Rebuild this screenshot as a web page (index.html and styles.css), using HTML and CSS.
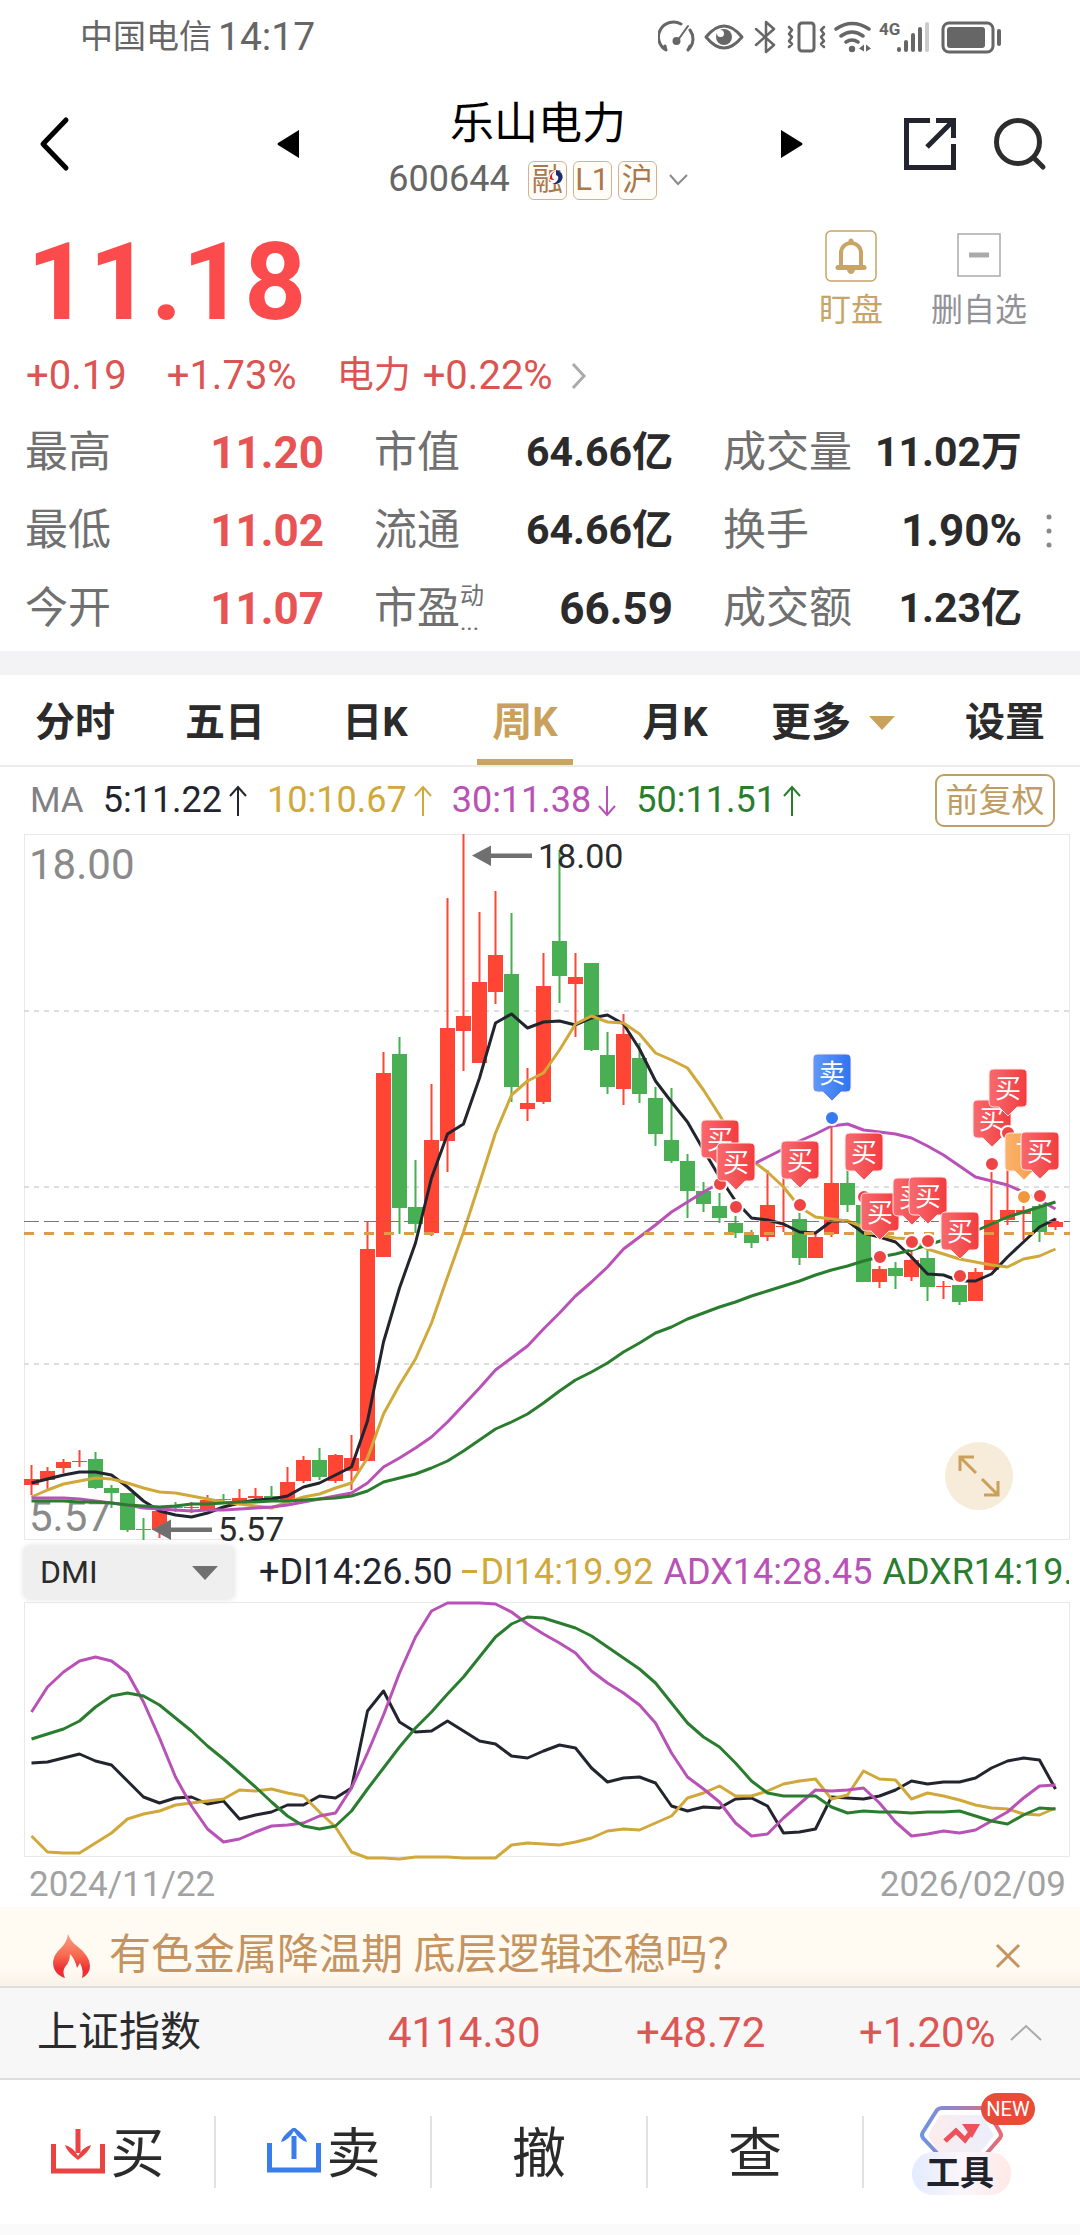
FILE: index.html
```html
<!DOCTYPE html>
<html lang="zh-CN">
<head>
<meta charset="utf-8">
<meta name="viewport" content="width=device-width, initial-scale=1">
<title>乐山电力 600644</title>
<link rel="stylesheet" href="styles.css">
</head>
<body>
<div class="status">
  <div class="status-left"><span>中国电信</span><span class="clock">14:17</span></div>
  <svg class="status-icons" viewBox="658 17 346 38" width="346" height="38" fill="none" stroke="#666" stroke-width="3" stroke-linecap="round" stroke-linejoin="round">
    <path d="M666 49a15 15 0 0 1 15-26M690 29a15 15 0 0 1-2 20M666 49l-1-4M688 49l2-4"/>
    <path d="M688 25l-10 14" stroke-width="2"/><circle cx="676.500" cy="40" r="2.500" fill="#666"/>
    <path d="M706 36q9-11 18-11t18 11q-9 11-18 11t-18-11z"/>
    <circle cx="724" cy="36" r="8" fill="#666" stroke="none"/><circle cx="720.500" cy="32.500" r="3.500" fill="#fff" stroke="none"/>
    <path d="M756 28l18 16-8 7V21l8 7-18 16" stroke-width="2.500"/>
    <rect x="799" y="22" width="15" height="28" rx="3"/>
    <path d="M789 26l3 3-3 4 3 3-3 4 3 3-3 3M824 26l-3 3 3 4-3 3 3 4-3 3 3 3" stroke-width="2.500"/>
    <path d="M836 28q16-11 33 0M841 35q11-8 22 0M846 41q6-4 12 0" stroke-width="3.500"/>
    <circle cx="852" cy="48" r="3.200" fill="#666" stroke="none"/>
    <path d="M859 47.500l5-4v7zM871 47.500l-5-4v7z" fill="#666" stroke="none"/>
    <text x="879" y="34" class="net" fill="#666" stroke="none">4G</text>
    <path d="M899 48v1M906 41v8M913 34v15M920 28v21" stroke-width="4"/><path d="M927 23v26" stroke="#ccc" stroke-width="4"/>
    <rect x="943" y="22" width="50" height="29" rx="6"/><rect x="947" y="26" width="38" height="21" rx="3" fill="#666" stroke="none"/>
    <path d="M999 30v13" stroke-width="4"/>
  </svg>
</div>

<header class="top">
  <button class="plain back" aria-label="返回"><svg width="34" height="60" viewBox="0 0 34 60" fill="none" stroke="#000" stroke-width="5" stroke-linecap="round" stroke-linejoin="round"><path d="M30 6 7 30l23 24"/></svg></button>
  <div class="switcher">
    <button class="plain" aria-label="上一只"><svg width="22" height="30" viewBox="0 0 22 30"><path d="M22 1v28L1 16q-1-1 0-2z"/></svg></button>
    <div class="title">
      <h1>乐山电力</h1>
      <div class="code-row">
        <span class="code">600644</span>
        <span class="tag">融<svg class="tag-logo" viewBox="0 0 14 14" width="14" height="14"><circle cx="7" cy="7" r="7" fill="#fff"/><path d="M7 0a7 7 0 1 1-4 13 5 5 0 0 0 6-4 3 3 0 0 0-2-4z" fill="#1d2a6b"/><path d="M8 1a5 5 0 0 0-4 8 3 3 0 0 0 4-1 5 5 0 0 1-7 1A7 7 0 0 1 8 1z" fill="#d8202c"/></svg></span>
        <span class="tag">L1</span>
        <span class="tag">沪</span>
        <svg class="code-arrow" width="19" height="12" viewBox="0 0 19 12" fill="none" stroke="#8a8a8a" stroke-width="2"><path d="M1 1l8 9 9-9"/></svg>
      </div>
    </div>
    <button class="plain" aria-label="下一只"><svg width="22" height="30" viewBox="0 0 22 30"><path d="M0 1v28l21-13q1-1 0-2z"/></svg></button>
  </div>
  <div class="top-actions">
    <button class="plain" aria-label="分享"><svg width="54" height="54" viewBox="0 0 54 54" fill="none" stroke="#24242e" stroke-width="5"><path d="M27 3.500H3.500v47h47V27M33 3.500h17.500V21M50 4 24 30"/></svg></button>
    <button class="plain" aria-label="搜索"><svg width="54" height="54" viewBox="0 0 54 54" fill="none" stroke="#2d2d2d" stroke-width="5" stroke-linecap="round"><circle cx="25" cy="25" r="21.500"/><path d="M41 41l9 9"/></svg></button>
  </div>
</header>

<main>
<section class="quote">
  <div class="price">11.18</div>
  <div class="watch">
    <button class="plain watch-btn gold"><svg width="52" height="52" viewBox="0 0 52 52" fill="none" stroke="currentColor"><rect x="1" y="1" width="50" height="50" rx="5" stroke-width="1.500"/><path d="M16 37V23a10 10 0 0 1 20 0v14" stroke-width="4"/><path d="M13 37.500h26" stroke-width="5" stroke-linecap="round"/><circle cx="26" cy="11" r="2.500" fill="currentColor" stroke="none"/><path d="M22 40h8q-1 4-4 4t-4-4z" fill="currentColor" stroke="none"/></svg><span>盯盘</span></button>
    <button class="plain watch-btn gray"><svg width="52" height="52" viewBox="0 0 52 52" fill="none" stroke="#aaa"><rect x="5" y="4" width="42" height="42" stroke-width="1.500"/><path d="M16 25h20" stroke-width="5"/></svg><span>删自选</span></button>
  </div>
</section>
<div class="change"><span>+0.19</span><span>+1.73%</span><a href="#sector"><span class="cn">电力</span> +0.22%<svg width="16" height="28" viewBox="0 0 16 28" fill="none" stroke="#aaa" stroke-width="3"><path d="M2 2l11 12L2 26"/></svg></a></div>

<div class="stats-wrap">
  <dl class="stats">
    <div><dt>最高</dt><dd class="up">11.20</dd></div><div><dt>市值</dt><dd class="unit">64.66亿</dd></div><div><dt>成交量</dt><dd class="unit">11.02万</dd></div>
    <div><dt>最低</dt><dd class="up">11.02</dd></div><div><dt>流通</dt><dd class="unit">64.66亿</dd></div><div><dt>换手</dt><dd>1.90%</dd></div>
    <div><dt>今开</dt><dd class="up">11.07</dd></div><div><dt class="pe">市盈<span class="pe-note"><small>动</small><small>...</small></span></dt><dd>66.59</dd></div><div><dt>成交额</dt><dd class="unit">1.23亿</dd></div>
  </dl>
  <button class="plain more-dots" aria-label="更多指标"><svg width="6" height="34" viewBox="0 0 6 34" fill="#888"><circle cx="3" cy="3" r="2.500"/><circle cx="3" cy="17" r="2.500"/><circle cx="3" cy="31" r="2.500"/></svg></button>
</div>

<nav class="tabs">
  <button>分时</button><button>五日</button><button>日K</button><button class="active">周K</button><button>月K</button>
  <button class="more">更多<svg width="26" height="14" viewBox="0 0 26 14" fill="#c9a05c"><path d="M0 0h26L13 14z"/></svg></button><button>设置</button>
</nav>

<section class="ma-row">
  <span class="ma-name">MA</span>
  <span class="black">5:11.22<svg class="arrow" viewBox="0 0 20 32"><path d="M10 31V2M2 11l8-9 8 9"/></svg></span>
  <span class="yellow">10:10.67<svg class="arrow" viewBox="0 0 20 32"><path d="M10 31V2M2 11l8-9 8 9"/></svg></span>
  <span class="purple">30:11.38<svg class="arrow" viewBox="0 0 20 32"><path d="M10 1v29M2 21l8 9 8-9"/></svg></span>
  <span class="green">50:11.51<svg class="arrow" viewBox="0 0 20 32"><path d="M10 31V2M2 11l8-9 8 9"/></svg></span>
  <button class="adjust">前复权</button>
</section>

<section class="chart">
  <svg id="kline" class="plot" viewBox="24 834 1047 706"></svg>
  <button class="plain expand" aria-label="全屏"><svg width="68" height="68" viewBox="0 0 68 68" fill="none" stroke="#c9a05c" stroke-width="3"><circle cx="34" cy="34" r="34" fill="#f7ecd9" stroke="none"/><path d="M15 29V15h14M16 16l15 15M53 39v14H39M52 52 37 37"/></svg></button>
</section>

<section class="indicator">
  <label class="picker"><select aria-label="指标"><option>DMI</option></select><svg width="26" height="14" viewBox="0 0 26 14" fill="#707070"><path d="M0 0h26L13 14z"/></svg></label>
  <div class="legend"><span class="black">+DI14:26.50</span><span class="yellow"><i class="dash"></i>DI14:19.92</span><span class="purple">ADX14:28.45</span><span class="green">ADXR14:19.</span></div>
</section>
<section class="chart">
  <svg id="dmi" class="plot" viewBox="24 1602 1047 258"></svg>
</section>
<div class="dates"><time>2024/11/22</time><time>2026/02/09</time></div>
</main>

<aside class="banner">
  <svg width="38" height="44" viewBox="0 0 38 44"><defs><linearGradient id="flame" x1="0" y1="0" x2="0" y2="1"><stop offset="0" stop-color="#f9a183"/><stop offset=".5" stop-color="#f7684f"/><stop offset=".8" stop-color="#ee2f35"/></linearGradient></defs><path d="M15 0q3 8 9 12 13 10 13 20 0 8-8 12 2-7-2-15l-3 5q-2-9-7-14 0 8-5 13-3 4 0 11-12-4-12-16Q1 20 8 14 14 8 15 0z" fill="url(#flame)"/></svg>
  <a href="#news">有色金属降温期 底层逻辑还稳吗？</a>
  <button class="plain" aria-label="关闭"><svg width="26" height="26" viewBox="0 0 26 26" fill="none" stroke="#c4935f" stroke-width="3"><path d="M2 2l22 22M24 2 2 24"/></svg></button>
</aside>

<div class="index-bar">
  <span class="index-name">上证指数</span><span>4114.30</span><span>+48.72</span><span>+1.20%</span>
  <svg width="32" height="18" viewBox="0 0 32 18" fill="none" stroke="#aaa" stroke-width="2"><path d="M1 16 16 2l15 14"/></svg>
</div>

<footer class="trade">
  <button><svg width="56" height="48" viewBox="0 0 56 48" fill="none" stroke="#ea4343" stroke-width="5"><path d="M3.500 16v27h49V16"/><path d="M28 1v24"/><path d="M15 17q8 2 13 11 5-9 13-11-1 6-13 15Q16 23 15 17z" fill="#ea4343" stroke="none"/></svg><span>买</span></button>
  <button><svg width="56" height="48" viewBox="0 0 56 48" fill="none" stroke="#3b7ceb" stroke-width="5"><path d="M3.500 15v27h49V15"/><path d="M28 31V8"/><path d="M15 14q8-2 13-11 5 9 13 11-1-6-13-15Q16 8 15 14z" fill="#3b7ceb" stroke="none"/></svg><span>卖</span></button>
  <button><span>撤</span></button>
  <button><span>查</span></button>
  <button class="tools"><svg width="124" height="103" viewBox="912 2093 124 103">
    <defs>
      <linearGradient id="hex" x1="0" x2="1"><stop offset="0" stop-color="#6f94e0"/><stop offset=".3" stop-color="#8d86cf"/><stop offset="1" stop-color="#e56b74"/></linearGradient>
      <linearGradient id="hexFill" x1="0" x2="1"><stop offset="0" stop-color="#fdeceb"/><stop offset="1" stop-color="#e9effc"/></linearGradient>
      <linearGradient id="pill" x1="0" x2="1"><stop offset="0" stop-color="#e3ebff"/><stop offset=".5" stop-color="#faf6fb"/><stop offset="1" stop-color="#ffe9e6"/></linearGradient>
    </defs>
    <path d="M940 2115h42l12 20-14 18h-42l-10-18z" fill="url(#hexFill)"/>
    <path d="M937 2153l-14-15q-2-3 0-6l14-22q2-2 5-2h40q3 0 5 2l13 22q2 3 0 6l-13 15" fill="none" stroke="url(#hex)" stroke-width="4"/>
    <path d="M945 2141l11-10 9 9 9-12" fill="none" stroke="#ee515a" stroke-width="5"/><path d="M962 2124h18l-8 14z" fill="#ee515a"/>
    <rect x="912" y="2152" width="99" height="43" rx="21" fill="url(#pill)"/>
    <text x="960" y="2185" text-anchor="middle" class="tools-text">工具</text>
    <rect x="981" y="2093" width="54" height="32" rx="16" fill="#e84b37"/>
    <text x="1008" y="2116" text-anchor="middle" class="new-text">NEW</text>
  </svg></button>
</footer>
<script src="chart.js"></script>
</body>
</html>
```
FILE: styles.css
```css
* { box-sizing: border-box; }
body { margin: 0; background: #fff; color: #2b2b2b; font-family: Roboto, "Noto Sans CJK SC", sans-serif; font-size: 35px; line-height: 1.2; }
button { font: inherit; color: inherit; background: none; border: 0; padding: 0; margin: 0; }
svg { display: block; flex: none; }
a { color: inherit; text-decoration: none; }
.plain { display: flex; align-items: center; }
.black { color: #22242e; }
.yellow { color: #d0a93a; }
.purple { color: #b952b7; }
.green { color: #2a7d2e; }

.status { display: flex; justify-content: space-between; align-items: center; height: 74px; padding: 0 76px 0 80px; color: #666; }
.status-left { display: flex; align-items: center; gap: 6px; font-size: 33px; }
.clock { font-size: 39px; }
.net { font-size: 17px; font-weight: 700; }

.top { display: grid; grid-template-columns: 1fr 526px 1fr; align-items: center; height: 140px; }
.back { padding-left: 36px; }
.switcher { display: flex; justify-content: space-between; align-items: center; }
.title { display: flex; flex-direction: column; align-items: center; gap: 8px; padding: 8px 4px 0 0; }
.title h1 { margin: 0; color: #000; font-size: 44px; line-height: 56px; font-weight: 400; }
.code-row { display: flex; align-items: center; gap: 6px; height: 40px; }
.code { color: #666; margin-right: 12px; font-size: 36px; }
.tag { position: relative; display: flex; align-items: center; justify-content: center; width: 39px; height: 39px; border: 1px solid #d9b08c; border-radius: 6px; color: #a9784d; background: #fffdf9; font-size: 31px; line-height: 36px; }
.tag-logo { position: absolute; right: 3px; top: 8px; }
.code-arrow { margin-left: 6px; }
.top-actions { display: flex; justify-content: flex-end; gap: 36px; padding-right: 33px; }

.quote { display: flex; justify-content: space-between; padding: 12px 53px 14px 27px; }
.price { color: #fc4b4c; font-size: 108px; line-height: 112px; font-weight: 700; }
.watch { display: flex; gap: 48px; padding-top: 4px; }
.watch-btn { flex-direction: column; gap: 8px; font-size: 32px; line-height: 40px; }
.gold { color: #c9a466; }
.gray { color: #929298; }
.change { display: flex; gap: 40px; padding: 0 26px; color: #dc5452; font-size: 40px; line-height: 48px; }
.change a { display: flex; align-items: center; gap: 12px; }
.change svg { margin-left: 6px; }
.cn { font-size: 37px; }

.stats-wrap { display: flex; align-items: center; padding: 14px 28px 3px 25px; border-bottom: 24px solid #f3f3f5; }
.stats { flex: 1; display: grid; grid-template-columns: repeat(3, 1fr); grid-auto-rows: 78px; column-gap: 50px; margin: 0; }
.stats > div { display: flex; justify-content: space-between; align-items: center; white-space: nowrap; }
.stats dt { color: #707070; font-size: 43px; }
.stats dd { margin: 0; font-size: 44px; font-weight: 700; }
.stats .unit { font-size: 41px; }
.stats .up { color: #e85353; }
.pe { display: flex; }
.pe-note { display: flex; flex-direction: column; }
.pe-note small { font-size: 24px; line-height: 26px; }
.more-dots { padding-left: 24px; }

.tabs { display: grid; grid-template-columns: 5fr 5fr 5fr 5fr 5fr 6fr 5fr; border-bottom: 2px solid #ebebed; }
.tabs button { position: relative; display: flex; align-items: center; justify-content: center; gap: 18px; height: 90px; padding-top: 6px; font-size: 40px; font-weight: 700; }
.tabs .more { padding-right: 14px; }
.tabs .active { color: #c9a05c; }
.tabs .active::after { content: ""; position: absolute; left: 18%; right: 18%; bottom: 0; height: 6px; background: #c9a466; }

.ma-row { display: flex; align-items: center; gap: 19px; height: 67px; padding: 0 25px 0 30px; font-size: 36px; }
.ma-row span { display: flex; align-items: center; gap: 6px; }
.ma-row .ma-name { color: #808085; font-size: 35px; }
.arrow { width: 20px; height: 32px; fill: none; stroke: currentColor; stroke-width: 2; }
.adjust { margin-left: auto; width: 120px; height: 53px; border: 2px solid #bf9f68; border-radius: 9px; color: #bf9c62; font-size: 33px; line-height: 40px; }

.chart { position: relative; padding: 0 9px 0 24px; }
.plot { width: 100%; height: auto; overflow: visible; }
.plot text { font-size: 34px; fill: #2b2b2b; }
.plot .scale { font-size: 42px; fill: #8a8a8a; }
.plot .pin-text { font-size: 26px; fill: #fff; }
.expand { position: absolute; right: 67px; bottom: 30px; }

.indicator { display: flex; align-items: center; gap: 25px; height: 62px; padding: 3px 11px 0 24px; }
.picker { position: relative; flex: none; width: 210px; height: 53px; display: flex; align-items: center; justify-content: flex-end; padding-right: 16px; background: #efefef; border-radius: 5px; box-shadow: 0 0 6px #ddd; }
.picker select { position: absolute; inset: 0; width: 100%; padding: 0 16px; border: 0; appearance: none; background: none; font: inherit; font-size: 32px; color: inherit; }
.legend { flex: 1; display: flex; gap: 10px; overflow: hidden; white-space: nowrap; font-size: 36px; }
.dash { display: inline-block; width: 15px; height: 3px; margin-right: 3px; background: currentColor; vertical-align: 11px; }
.dates { display: flex; justify-content: space-between; align-items: center; height: 47px; padding: 2px 14px 0 29px; color: #a2a2a2; }

.banner { display: flex; align-items: center; gap: 18px; height: 79px; padding: 18px 59px 0 53px; background: linear-gradient(#fffaf2 80%, #f9f2e8); color: #c4935f; font-size: 42px; white-space: nowrap; }
.banner a { flex: 1; }
.index-bar { display: grid; grid-template-columns: 351px 248px 223px 151px 1fr; align-items: center; height: 94px; padding: 0 37px; border-top: 2px solid #dedede; border-bottom: 2px solid #dedede; background: #f7f7f7; color: #dc5754; font-size: 42px; }
.index-name { color: #2b2b2b; font-size: 41px; }
.trade { display: grid; grid-template-columns: repeat(5, 1fr); align-items: center; height: 155px; border-bottom: 11px solid #fafafa; }
.trade button { display: flex; align-items: center; justify-content: center; gap: 5px; height: 72px; border-right: 2px solid #e2e2e2; font-size: 54px; line-height: 64px; }
.trade span { padding-top: 6px; }
.trade .tools { border: 0; padding: 0 0 16px 4px; }
.tools-text { font-size: 34px; font-weight: 700; fill: #20222c; }
.new-text { font-size: 20px; fill: #fff; }
```
FILE: chart.js
```js
const NS = 'http://www.w3.org/2000/svg';
const RED = '#ff4634', GREEN = '#48af53';
const X0 = 31.5, STEP = 16;
const xAt = i => X0 + STEP * i;

function add(parent, tag, attrs, text) {
  const el = document.createElementNS(NS, tag);
  for (const k in attrs) el.setAttribute(k, attrs[k]);
  if (text) el.textContent = text;
  parent.appendChild(el);
  return el;
}
function line(svg, color, ys) {
  add(svg, 'polyline', { points: ys.map((y, i) => xAt(i) + ',' + y).join(' '), fill: 'none', stroke: color, 'stroke-width': 3, 'stroke-linejoin': 'round' });
}

// up/down flag, high, low, body top, body bottom
const candles = [
  [1,1465,1495,1479,1485],[1,1467,1490,1471,1480],[1,1459,1473,1462,1468],[1,1450,1467,1461,1462],[0,1452,1489,1459,1488],
  [0,1485,1508,1488,1493],[0,1493,1532,1493,1530],[0,1518,1540,1529,1530],[1,1511,1538,1511,1530],[0,1502,1512,1507,1508],
  [1,1502,1513,1507,1508],[1,1495,1510,1500,1509],[0,1494,1503,1499,1500],[1,1489,1503,1498,1502],[1,1488,1500,1496,1498],
  [0,1486,1500,1496,1500],[1,1467,1500,1482,1500],[1,1456,1483,1460,1481],[0,1448,1480,1460,1477],[1,1454,1483,1455,1481],
  [1,1435,1490,1458,1471],[1,1222,1461,1249,1461],[1,1052,1257,1073,1257],[0,1037,1234,1054,1208],[0,1160,1233,1207,1224],
  [1,1084,1236,1140,1233],[1,898,1172,1028,1141],[1,834,1071,1016,1031],[1,912,1063,982,1063],[1,891,1004,955,992],
  [0,913,1102,974,1087],[1,1068,1121,1103,1109],[1,953,1104,986,1102],[0,850,1003,941,976],[1,953,1037,977,984],
  [0,963,1051,963,1050],[0,1032,1094,1055,1087],[1,1014,1105,1034,1089],[0,1043,1103,1058,1094],[0,1087,1146,1098,1134],
  [0,1088,1163,1140,1161],[0,1154,1218,1161,1191],[0,1182,1212,1191,1204],[0,1193,1223,1206,1218],[0,1216,1238,1223,1233],
  [0,1230,1248,1235,1243],[1,1170,1241,1205,1237],[1,1177,1232,1226,1227],[0,1210,1265,1219,1258],[1,1232,1258,1237,1258],
  [1,1127,1237,1183,1234],[0,1170,1212,1183,1205],[0,1203,1282,1205,1282],[1,1266,1288,1269,1282],[0,1262,1289,1268,1276],
  [1,1247,1281,1260,1277],[0,1248,1301,1258,1287],[1,1281,1299,1286,1287],[0,1285,1305,1285,1302],[1,1268,1301,1272,1301],
  [1,1172,1270,1220,1270],[1,1170,1225,1210,1220],[1,1206,1240,1210,1214],[0,1200,1242,1206,1232],[1,1218,1230,1222,1227]
];
const ma5 = [1483,1479,1475,1472,1472,1475,1487,1501,1511,1515,1517,1513,1507,1503,1500,1499,1496,1487,1483,1475,1467,1421,1342,1288,1243,1178,1134,1124,1078,1023,1014,1028,1022,1021,1025,1018,1015,1024,1049,1081,1102,1122,1150,1177,1201,1218,1220,1224,1232,1233,1221,1221,1233,1237,1242,1257,1274,1275,1281,1281,1274,1257,1242,1227,1219];
const ma10 = [1497,1490,1484,1481,1478,1479,1483,1488,1492,1493,1496,1499,1502,1504,1506,1508,1502,1497,1494,1488,1483,1458,1414,1385,1359,1323,1277,1232,1183,1133,1095,1081,1073,1050,1024,1016,1022,1023,1034,1053,1060,1068,1090,1115,1142,1160,1172,1187,1207,1217,1219,1221,1227,1235,1238,1239,1249,1254,1259,1262,1265,1267,1259,1256,1249];
const ma30 = [1498,1498,1498,1499,1501,1503,1505,1508,1509,1510,1511,1510,1510,1509,1508,1507,1505,1502,1499,1496,1493,1483,1467,1458,1448,1437,1422,1405,1388,1370,1358,1346,1329,1313,1296,1282,1267,1249,1237,1225,1212,1202,1192,1183,1173,1165,1157,1149,1141,1134,1126,1124,1130,1132,1134,1138,1146,1155,1166,1177,1181,1185,1192,1200,1209];
const ma50 = [1501,1501,1501,1502,1502,1503,1505,1506,1507,1506,1504,1504,1503,1502,1502,1501,1501,1500,1499,1498,1496,1491,1482,1478,1474,1468,1461,1451,1440,1429,1422,1414,1403,1391,1380,1372,1363,1352,1343,1333,1327,1319,1313,1307,1302,1296,1291,1286,1281,1275,1270,1266,1261,1257,1254,1250,1245,1240,1236,1231,1224,1217,1212,1207,1202];
// candle index, top of the flag, label, gradient
const pins = [[43,1120,'买','buy'],[44,1143,'买','buy'],[48,1141,'买','buy'],[50,1054,'卖','sell'],[52,1133,'买','buy'],[53,1193,'买','buy'],[55,1178,'买','buy'],[56,1177,'买','buy'],[58,1212,'买','buy'],[60,1100,'买','buy'],[61,1069,'买','buy'],[62,1133,'T','both'],[63,1132,'买','buy']];
const dotColor = { buy: '#ef4444', sell: '#357bf0', both: '#f0983c' };

const k = document.getElementById('kline');
const defs = add(k, 'defs', {});
[['buy', '#f96a6e', '#f13c3f'], ['sell', '#6298f8', '#2f74f2'], ['both', '#fbb26c', '#f39c40']].forEach(([id, a, b]) => {
  const g = add(defs, 'linearGradient', { id });
  add(g, 'stop', { offset: 0, 'stop-color': a });
  add(g, 'stop', { offset: 1, 'stop-color': b });
});
add(k, 'rect', { x: 24.5, y: 834.5, width: 1045, height: 705, fill: 'none', stroke: '#e9e9e9', 'stroke-width': 1 });
[1011, 1187, 1364].forEach(y => add(k, 'path', { d: `M24 ${y}H1070`, stroke: '#dedede', 'stroke-width': 2, 'stroke-dasharray': '5 5' }));
candles.forEach(([up, hi, lo, top, bottom], i) => {
  const fill = up ? RED : GREEN;
  add(k, 'rect', { x: xAt(i) - 1, y: hi, width: 2, height: lo - hi, fill });
  add(k, 'rect', { x: xAt(i) - 7.5, y: top, width: 15, height: bottom - top, fill });
});
add(k, 'text', { x: 29, y: 879, class: 'scale' }, '18.00');
add(k, 'text', { x: 29, y: 1531, class: 'scale' }, '5.57');
line(k, '#22242e', ma5);
line(k, '#d0a93a', ma10);
line(k, '#b952b7', ma30);
line(k, '#2a7d2e', ma50);
add(k, 'path', { d: 'M24 1221.5H1070', stroke: '#777', 'stroke-width': 1, 'stroke-dasharray': '15 5' });
add(k, 'path', { d: 'M24 1233.5H1070', stroke: '#dd9c45', 'stroke-width': 3, 'stroke-dasharray': '10 10' });
add(k, 'path', { d: 'M472 855.5l19-10v8h41v4.500h-41v8z', fill: '#707070' });
add(k, 'text', { x: 538, y: 868 }, '18.00');
add(k, 'path', { d: 'M152 1529.500l19-10v8h41v4.500h-41v8z', fill: '#707070' });
add(k, 'text', { x: 218, y: 1541 }, '5.57');
pins.forEach(([i, y, label, kind]) => {
  const x = xAt(i) + 0.5;
  add(k, 'path', { d: `M${x - 14} ${y}h28q5 0 5 5v28q0 5-5 5h-5l-9 9-9-9h-5q-5 0-5-5v-28q0-5 5-5z`, fill: `url(#${kind})`, stroke: '#ffe7e7', 'stroke-width': 1 });
  add(k, 'text', { x, y: y + 29, 'text-anchor': 'middle', class: 'pin-text' }, label);
  add(k, 'circle', { cx: x, cy: y + 64, r: 7, fill: dotColor[kind], stroke: '#fff', 'stroke-width': 2 });
});

const d = document.getElementById('dmi');
add(d, 'rect', { x: 24.5, y: 1602.5, width: 1045, height: 254, fill: 'none', stroke: '#e9e9e9', 'stroke-width': 1 });
line(d, '#22242e', [1763,1762,1758,1754,1761,1765,1781,1797,1803,1798,1797,1804,1801,1819,1815,1812,1805,1805,1796,1798,1788,1711,1691,1722,1732,1731,1721,1731,1741,1744,1756,1758,1751,1745,1748,1768,1782,1778,1777,1783,1806,1811,1807,1808,1799,1798,1806,1833,1832,1829,1797,1798,1799,1796,1790,1781,1784,1782,1782,1778,1768,1761,1758,1760,1789]);
line(d, '#d0a93a', [1836,1852,1853,1853,1843,1833,1819,1814,1811,1805,1803,1801,1799,1790,1791,1789,1793,1796,1812,1827,1852,1858,1858,1859,1857,1857,1857,1858,1858,1858,1845,1843,1844,1845,1842,1838,1831,1829,1830,1823,1816,1798,1793,1786,1796,1796,1791,1784,1781,1779,1799,1795,1771,1779,1780,1799,1793,1796,1800,1805,1808,1809,1814,1815,1808]);
line(d, '#b952b7', [1712,1687,1672,1661,1657,1661,1673,1702,1738,1777,1806,1829,1842,1839,1832,1826,1825,1823,1816,1813,1788,1753,1715,1673,1637,1611,1603,1603,1603,1604,1612,1624,1634,1643,1653,1671,1683,1693,1705,1723,1753,1777,1789,1802,1823,1836,1834,1818,1804,1790,1791,1790,1788,1803,1822,1836,1834,1831,1833,1830,1821,1812,1798,1786,1785]);
line(d, '#2a7d2e', [1739,1734,1729,1721,1707,1696,1693,1696,1705,1718,1731,1746,1759,1773,1787,1802,1816,1826,1829,1826,1811,1789,1768,1747,1728,1712,1694,1677,1657,1637,1624,1617,1618,1623,1628,1636,1647,1658,1669,1683,1703,1723,1737,1747,1763,1781,1793,1796,1796,1796,1807,1813,1811,1812,1812,1813,1812,1812,1811,1816,1821,1824,1815,1808,1809]);
```
